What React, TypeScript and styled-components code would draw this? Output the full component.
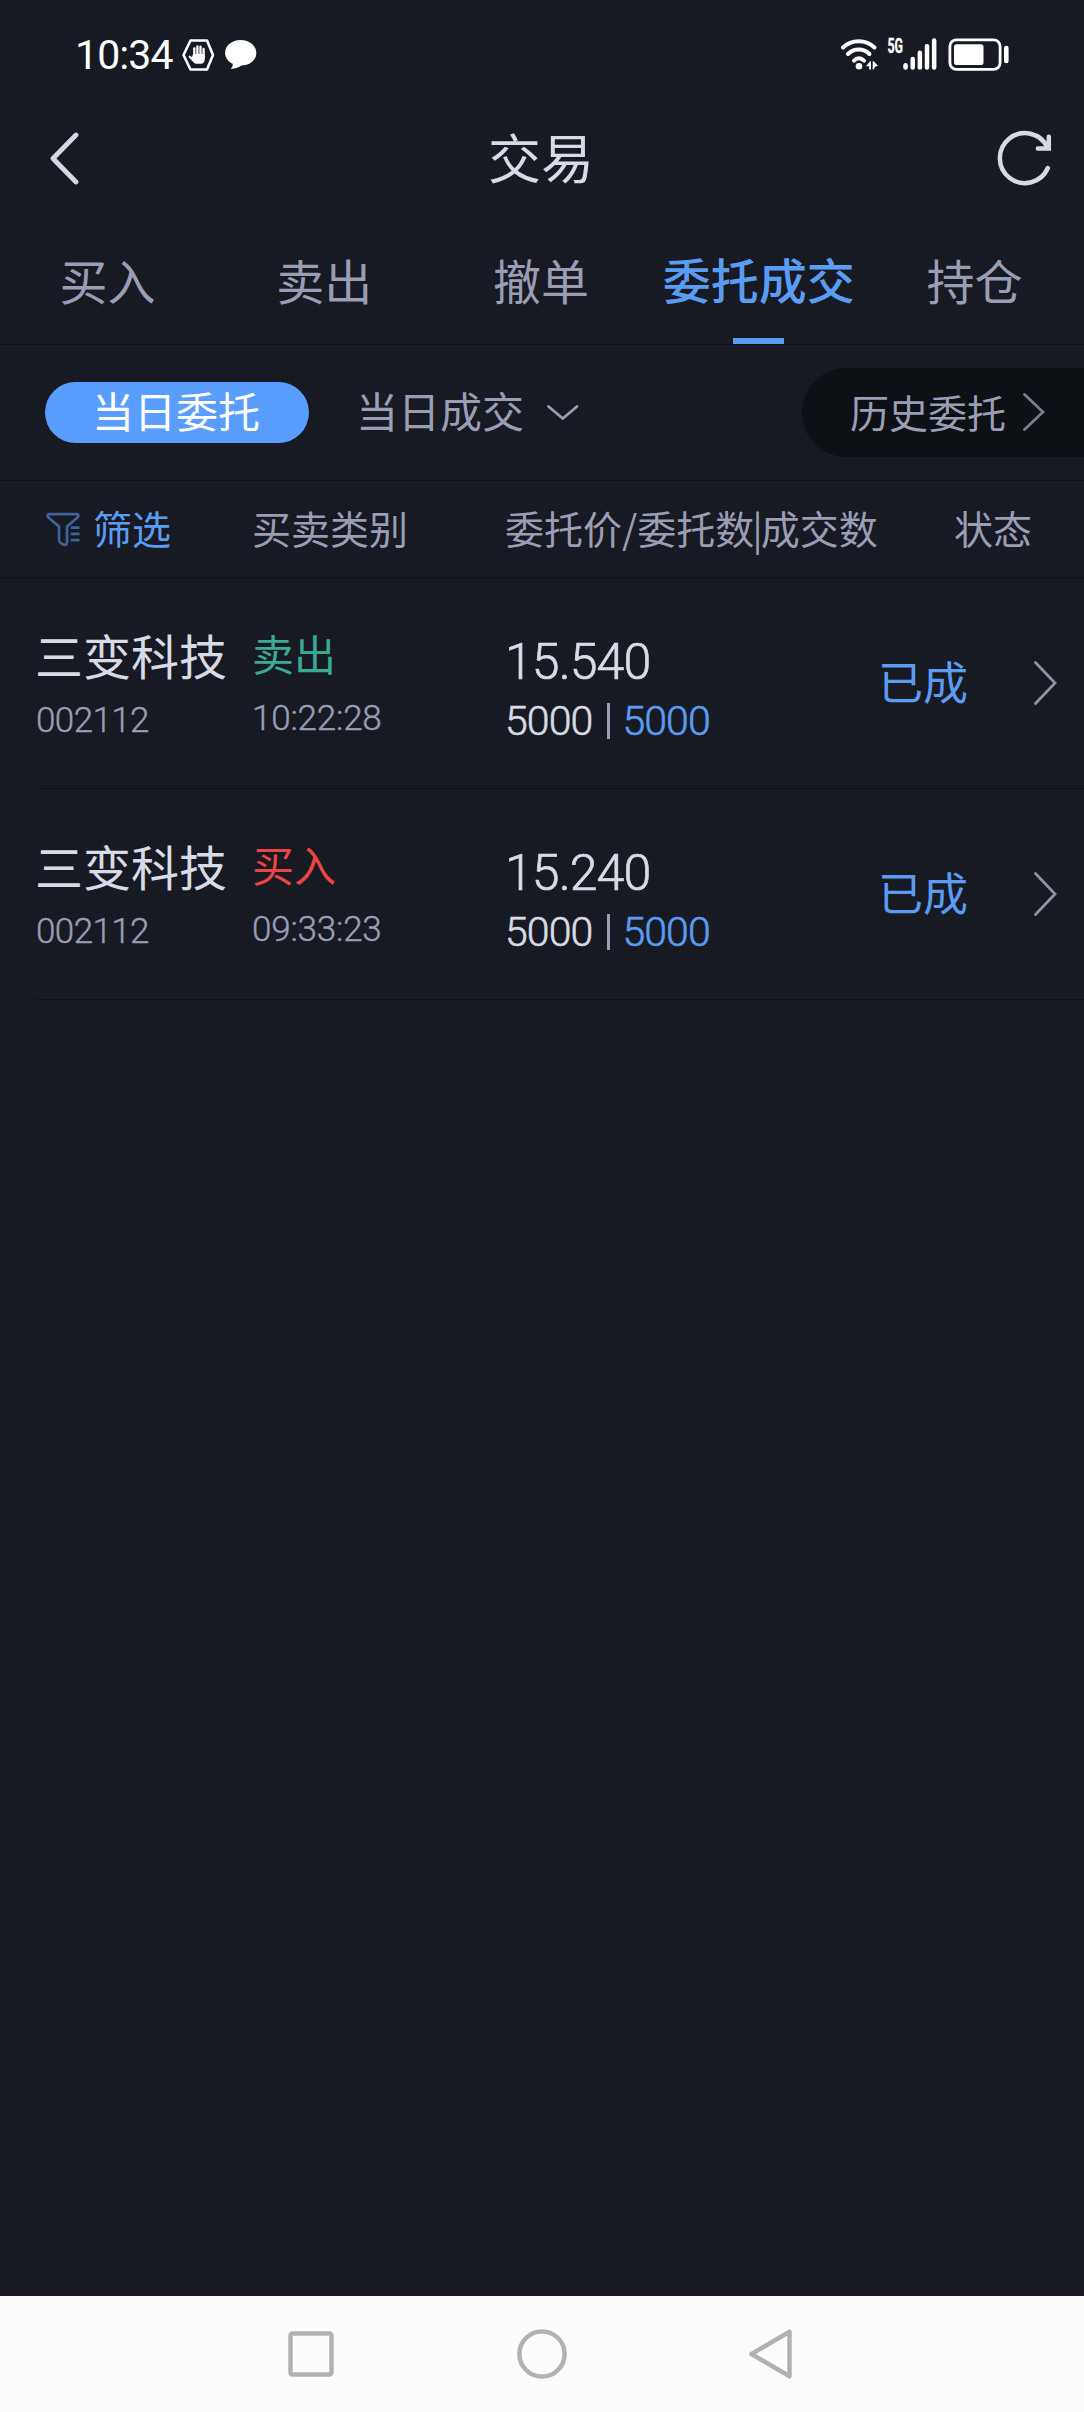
import React from "react";
import styled, { createGlobalStyle } from "styled-components";

const color = {
  bg: "#171a22",
  line: "#0e1117",
  pill: "#0d1014",
  text: "#d8dbe5",
  muted: "#9a9db4",
  blue: "#5b9cf3",
  chip: "#589dff",
  sell: "#39ab92",
  buy: "#e94545",
};

const cjk = `"Noto Sans CJK SC", sans-serif`;
const latin = `Roboto, "Liberation Sans", sans-serif`;

const GlobalStyle = createGlobalStyle`
  * { box-sizing: border-box; }
  body { margin: 0; background: ${color.bg}; }
  svg { display: block; flex: none; }
`;

const Screen = styled.div`
  width: 1084px;
  height: 2412px;
  display: flex;
  flex-direction: column;
  background: ${color.bg};
  font-family: ${cjk};
  font-weight: 400;
  overflow: hidden;
`;

const StatusBar = styled.div`
  height: 104px;
  padding: 5px 74px 0 75px;
  display: flex;
  align-items: center;
  justify-content: space-between;
  flex: none;
`;

const StatusGroup = styled.div`
  display: flex;
  align-items: center;
`;

const Clock = styled.span`
  width: 106px;
  font: 400 41px/48px ${latin};
  letter-spacing: -0.9px;
  color: #fff;
  white-space: nowrap;
`;

const TitleBar = styled.header`
  height: 108px;
  padding: 0 31px 0 49px;
  display: grid;
  grid-template-columns: 60px 1fr 60px;
  align-items: center;
  flex: none;
`;

const Title = styled.h1`
  margin: 0 20px 4px 0;
  font-size: 53px;
  line-height: 60px;
  font-weight: 400;
  text-align: center;
  color: ${color.text};
`;

const IconEnd = styled.div`
  display: flex;
  justify-content: flex-end;
`;

const Tabs = styled.nav`
  height: 133px;
  display: grid;
  grid-template-columns: repeat(5, 1fr);
  border-bottom: 1px solid ${color.line};
  flex: none;
`;

const Tab = styled.div<{ $active?: boolean }>`
  display: flex;
  flex-direction: column;
  align-items: center;
  justify-content: space-between;
  padding-top: ${(p) => (p.$active ? 38 : 39)}px;
  padding-right: ${(p) => (p.$active ? 0 : 2)}px;
  font-size: 48px;
  line-height: 56px;
  font-weight: ${(p) => (p.$active ? 500 : 400)};
  color: ${(p) => (p.$active ? color.blue : color.muted)};
  white-space: nowrap;
`;

const Underline = styled.div`
  width: 51px;
  height: 6px;
  background: ${color.blue};
`;

const FilterBar = styled.div`
  height: 136px;
  display: flex;
  align-items: center;
  padding-left: 45px;
  border-bottom: 1px solid ${color.line};
  flex: none;
`;

const Chip = styled.div`
  width: 264px;
  height: 61px;
  padding-right: 2px;
  border-radius: 31px;
  background: ${color.chip};
  color: #fff;
  font-size: 42px;
  line-height: 56px;
  text-align: center;
`;

const Dropdown = styled.div`
  margin-left: 47px;
  display: flex;
  align-items: center;
  gap: 22px;
  color: ${color.muted};
  font-size: 42px;
  line-height: 56px;
  padding-bottom: 6px;

  svg { margin-top: 7px; }
`;

const History = styled.div`
  width: 282px;
  height: 89px;
  margin-left: auto;
  padding: 0 0 2px 48px;
  border-radius: 45px 0 0 45px;
  background: ${color.pill};
  display: flex;
  align-items: center;
  gap: 17px;
  color: ${color.muted};
  font-size: 39px;
  line-height: 85px;
`;

const HeaderRow = styled.div`
  height: 97px;
  padding-left: 35px;
  display: grid;
  grid-template-columns: 217px 253px 449px 1fr;
  border-bottom: 1px solid ${color.line};
  font-size: 39px;
  line-height: 92px;
  color: ${color.muted};
  white-space: nowrap;
  flex: none;
`;

const FilterButton = styled.div`
  height: 92px;
  display: flex;
  align-items: center;
  gap: 11px;
  padding-left: 10px;
  color: ${color.blue};

  svg { margin-top: 4px; }
`;

const Bar = styled.span`
  margin: 0 -2px;
`;

const Row = styled.div`
  height: 211px;
  margin-left: 36px;
  display: grid;
  grid-template-columns: 216px 253px 373px 1fr;
  border-bottom: 1px solid ${color.line};
  flex: none;
`;

const Cell = styled.div<{ $top: number; $gap: number }>`
  display: flex;
  flex-direction: column;
  padding-top: ${(p) => p.$top}px;
  gap: ${(p) => p.$gap}px;
  white-space: nowrap;
`;

const Name = styled.div`
  margin-left: -1px;
  font-size: 48px;
  line-height: 56px;
  color: ${color.text};
`;

const Side = styled.div<{ $side: "buy" | "sell" }>`
  font-size: 42px;
  line-height: 50px;
  color: ${(p) => color[p.$side]};
`;

const Small = styled.div<{ $spacing: number }>`
  font: 300 35px/36px ${latin};
  letter-spacing: ${(p) => p.$spacing}px;
  color: ${color.muted};
  -webkit-text-stroke: 0.4px currentColor;
`;

const Price = styled.div`
  font: 300 50px/56px ${latin};
  letter-spacing: -0.9px;
  color: ${color.text};
  -webkit-text-stroke: 0.7px currentColor;
`;

const Quantity = styled.div`
  display: flex;
  align-items: center;
  font: 300 41px/40px ${latin};
  letter-spacing: -0.9px;
  color: ${color.text};
  -webkit-text-stroke: 0.6px currentColor;
`;

const Separator = styled.i`
  width: 3px;
  height: 36px;
  margin: 0 12px 0 15px;
  background: ${color.muted};
`;

const Filled = styled.span`
  color: ${color.blue};
`;

const Status = styled.div`
  display: flex;
  align-items: center;
  justify-content: space-between;
  padding-right: 27px;
  font-size: 45px;
  line-height: 60px;
  color: ${color.blue};
`;

const StatusText = styled.span`
  padding-bottom: 4px;
`;

const NavBar = styled.footer`
  height: 116px;
  margin-top: auto;
  padding: 0 290px 0 286px;
  background: #fcfcfc;
  display: flex;
  align-items: center;
  justify-content: space-between;
  flex: none;
`;

const HandIcon = () => (
  <svg width="34" height="34" viewBox="181 37 34 34">
    <path d="M190.500 39.500h16.500l6 14.500-6 14.500h-16.500l-7-14.500z" fill="none" stroke="#fff" strokeWidth="2.600" strokeLinejoin="round" />
    <g fill="none" stroke="#fff" strokeWidth="2.300" strokeLinecap="round">
      <path d="M194.300 47.300V56M197.400 45.300V55M200.500 45.600V55M203.600 48V57M189.700 55.700L194 60" />
    </g>
    <path d="M193.200 53h11.500v5.500c0 2.600-1.500 4.300-3.700 4.300h-4.200c-1.300 0-2.200-.5-3-1.400l-2.800-3.200z" fill="#fff" />
  </svg>
);

const BubbleIcon = () => (
  <svg width="42" height="30" viewBox="215 40 42 30">
    <path d="M240.700 40c8.800 0 15.600 5.600 15.600 12.900s-6.600 12.700-15 12.700c-2 1.800-5.800 3.300-10.600 3.400 1.600-1.800 2.300-3.500 2-5.300-4.600-2.200-7.600-6.200-7.600-10.800 0-7.300 6.800-12.900 15.600-12.900z" fill="#fff" />
  </svg>
);

const SignalIcons = () => (
  <svg width="170" height="56" viewBox="840 27 170 56">
    <g fill="none" stroke="#fff" strokeWidth="4" strokeLinecap="round">
      <path d="M843 47.500c8.500-8.500 23-8.500 31.500 0" />
      <path d="M848 54c6-6 15.500-6 21.500 0" />
      <path d="M854 60.600c3-3 6.800-3 10 0" />
    </g>
    <circle cx="859" cy="66.300" r="3.300" fill="#fff" />
    <path d="M866 66.200l4-4.900h1v8.300h-1.800v-3.400zM872.700 61.300h1l4.200 4.400-2.800 1-1.400 2.900h-1z" fill="#fff" />
    <text x="887.500" y="52.500" fontFamily="Roboto, sans-serif" fontWeight="700" fontSize="19.500" fill="#fff" stroke="#fff" strokeWidth="0.400" textLength="15.500" lengthAdjust="spacingAndGlyphs">
      5G
    </text>
    <g fill="#fff">
      {[63, 56.700, 50.500, 44, 38.300].map((y, i) => (
        <rect key={y} x={903.300 + i * 7.150} y={y} width="4.500" height={69.700 - y} rx="2.200" />
      ))}
      <rect x="954" y="44.300" width="29.500" height="20.700" rx="2.500" />
      <rect x="1004" y="45.700" width="4.600" height="17.500" rx="2.200" />
    </g>
    <rect x="949.900" y="39.900" width="50.200" height="29.400" rx="6.500" fill="none" stroke="#fff" strokeWidth="2.800" />
  </svg>
);

const BackIcon = () => (
  <svg width="32" height="54" viewBox="49 131 32 54">
    <path d="M76 135L53 158.500L76 182" fill="none" stroke="#d5d8e2" strokeWidth="4.800" strokeLinecap="round" strokeLinejoin="round" />
  </svg>
);

const RefreshIcon = () => (
  <svg width="57" height="56" viewBox="996 129 57 56">
    <g fill="none" stroke="#dad9e2" strokeWidth="4.500" strokeLinecap="round">
      <path d="M1047.800 167A25 25 0 1 1 1047.500 146.500" />
      <path d="M1048.800 135.800V147.400H1037.800" />
    </g>
  </svg>
);

const FunnelIcon = () => (
  <svg width="37" height="37" viewBox="45 510 37 37">
    <g fill="none" stroke="#40629f" strokeWidth="2.700" strokeLinejoin="round">
      <path d="M49 513.200h28c1.600 0 1.700 1.800.8 3L67 525.500v15.500c0 3-2.600 3.400-4.400 2.200l-2.400-1.700c-.9-.7-1.200-1.400-1.200-2.500v-13.500L48.200 516.200c-.9-1.200-.8-3 .8-3z" />
      <path d="M70.800 526.700h8.700M70.800 532.900h8.700M70.800 539.200h8.700" />
    </g>
  </svg>
);

const DownIcon = () => (
  <svg width="33" height="18" viewBox="546 404 33 18">
    <path d="M548.500 406.500L562.800 418.500L577 406.500" fill="none" stroke={color.muted} strokeWidth="2.800" strokeLinecap="round" />
  </svg>
);

const RightIcon = ({ w, h, stroke }: { w: number; h: number; stroke: string }) => (
  <svg width={w} height={h} viewBox={`0 0 ${w} ${h}`}>
    <path d={`M1.500 1.500L${w - 2} ${h / 2}L1.500 ${h - 1.5}`} fill="none" stroke={stroke} strokeWidth="2.800" strokeLinecap="round" />
  </svg>
);

const tabs = ["买入", "卖出", "撤单", "委托成交", "持仓"];

type Order = { name: string; code: string; side: "buy" | "sell"; time: string; price: string; qty: string; filled: string };

const orders: Order[] = [
  { name: "三变科技", code: "002112", side: "sell", time: "10:22:28", price: "15.540", qty: "5000", filled: "5000" },
  { name: "三变科技", code: "002112", side: "buy", time: "09:33:23", price: "15.240", qty: "5000", filled: "5000" },
];

export default function App() {
  return (
    <>
      <GlobalStyle />
      <Screen>
        <StatusBar>
          <StatusGroup>
            <Clock>10:34</Clock>
            <HandIcon />
            <BubbleIcon />
          </StatusGroup>
          <SignalIcons />
        </StatusBar>

        <TitleBar>
          <BackIcon />
          <Title>交易</Title>
          <IconEnd>
            <RefreshIcon />
          </IconEnd>
        </TitleBar>

        <Tabs>
          {tabs.map((t) => (
            <Tab key={t} $active={t === "委托成交"}>
              {t}
              {t === "委托成交" && <Underline />}
            </Tab>
          ))}
        </Tabs>

        <FilterBar>
          <Chip>当日委托</Chip>
          <Dropdown>
            当日成交
            <DownIcon />
          </Dropdown>
          <History>
            历史委托
            <RightIcon w={22} h={38} stroke="#747f90" />
          </History>
        </FilterBar>

        <HeaderRow>
          <FilterButton>
            <FunnelIcon />
            筛选
          </FilterButton>
          <span>买卖类别</span>
          <span>
            委托价/委托数<Bar>|</Bar>成交数
          </span>
          <span>状态</span>
        </HeaderRow>

        {orders.map((o) => (
          <Row key={o.time}>
            <Cell $top={48} $gap={21}>
              <Name>{o.name}</Name>
              <Small $spacing={-0.6}>{o.code}</Small>
            </Cell>
            <Cell $top={50} $gap={23}>
              <Side $side={o.side}>{o.side === "sell" ? "卖出" : "买入"}</Side>
              <Small $spacing={-0.2}>{o.time}</Small>
            </Cell>
            <Cell $top={56} $gap={11}>
              <Price>{o.price}</Price>
              <Quantity>
                {o.qty}
                <Separator />
                <Filled>{o.filled}</Filled>
              </Quantity>
            </Cell>
            <Status>
              <StatusText>已成</StatusText>
              <RightIcon w={23} h={44} stroke="#8f929f" />
            </Status>
          </Row>
        ))}

        <NavBar>
          <svg width="50" height="50" viewBox="0 0 50 50">
            <rect x="4.500" y="4.500" width="41" height="41" rx="2" fill="none" stroke="#b2b2b2" strokeWidth="4.500" />
          </svg>
          <svg width="50" height="50" viewBox="0 0 50 50">
            <circle cx="25" cy="25" r="22.600" fill="none" stroke="#b2b2b2" strokeWidth="4.500" />
          </svg>
          <svg width="46" height="50" viewBox="0 0 46 50">
            <path d="M41.500 2.800V47.200L3.500 25z" fill="none" stroke="#b2b2b2" strokeWidth="4.500" strokeLinejoin="round" />
          </svg>
        </NavBar>
      </Screen>
    </>
  );
}
